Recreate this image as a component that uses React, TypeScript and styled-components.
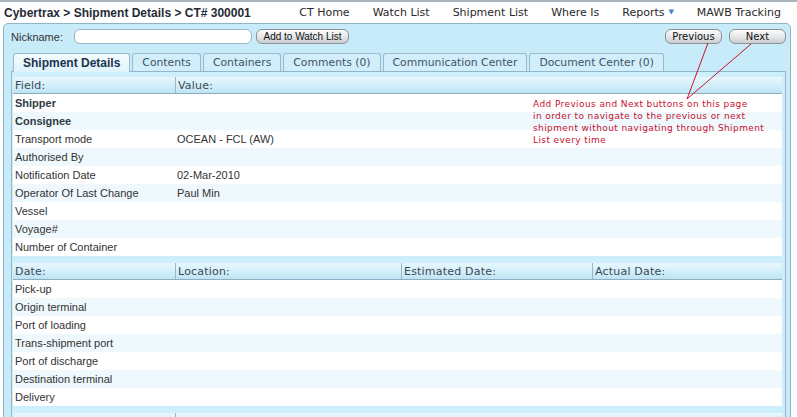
import React from 'react'
import styled, { createGlobalStyle } from 'styled-components'

const GlobalStyle = createGlobalStyle`
  html, body {
    margin: 0;
    padding: 0;
    background: #fff;
  }
  body {
    font-family: "Liberation Sans", Arial, sans-serif;
  }
`

const Page = styled.div`
  position: relative;
  width: 797px;
  height: 417px;
  overflow: hidden;
  border-top: 2px solid #a9b4bd;
  box-sizing: border-box;
`

const HeaderBar = styled.div`
  display: flex;
  align-items: center;
  height: 21px;
  padding: 0 16px 0 4px;
`

const Crumbs = styled.div`
  font-family: "Liberation Sans", Arial, sans-serif;
  font-weight: bold;
  font-size: 12px;
  color: #1f2b36;
  white-space: nowrap;
`

const Nav = styled.nav`
  display: flex;
  gap: 23px;
  margin-left: auto;
`

const NavLink = styled.span`
  font-family: "DejaVu Sans", Verdana, sans-serif;
  font-size: 11px;
  color: #2a2a2a;
  white-space: nowrap;
`

const Caret = styled.span`
  display: inline-block;
  margin-left: 4px;
  color: #3f86c4;
  font-size: 7px;
  vertical-align: 2px;
`

const Panel = styled.div`
  margin: 0 6px 0 3px;
  height: 400px;
  padding: 4px 4px 0 7px;
  background: #c8ebf9;
  border: 1px solid #8fb3c7;
  border-radius: 5px 5px 0 0;
  box-sizing: border-box;
`

const Toolbar = styled.div`
  display: flex;
  align-items: center;
  height: 17px;
  gap: 4px;
`

const Label = styled.span`
  font-size: 11px;
  color: #333;
  width: 59px;
`

const TextInput = styled.div`
  width: 176px;
  height: 13px;
  background: #fff;
  border: 1px solid #9db3c2;
  border-radius: 6px;
`

const PillButton = styled.div<{ $w: number; $font?: string }>`
  display: flex;
  align-items: center;
  justify-content: center;
  width: ${p => p.$w}px;
  height: 15px;
  box-sizing: border-box;
  border: 1px solid #8a9196;
  border-radius: 6px;
  background: linear-gradient(#fbfbfb, #e4e6e8 55%, #c9cdd0);
  font-family: ${p => p.$font ?? '"Liberation Sans", Arial, sans-serif'};
  font-size: 10px;
  color: #111;
  white-space: nowrap;
`

const Spacer = styled.div`
  flex: 1;
`

const NavButtons = styled.div`
  display: flex;
  gap: 7px;
  margin-top: -1px;
`

const TabRow = styled.div`
  display: flex;
  gap: 2px;
  margin-top: 8px;
  padding-left: 2px;
  height: 18px;
`

const Tab = styled.div<{ $active?: boolean }>`
  display: flex;
  align-items: center;
  padding: 0 9px;
  border: 1px solid #97bbcf;
  border-bottom: none;
  border-radius: 3px 3px 0 0;
  background: ${p => (p.$active ? 'linear-gradient(#f4fbfe, #dff3fc)' : '#d2eefa')};
  font-family: ${p => (p.$active ? '"Liberation Sans", Arial, sans-serif' : '"DejaVu Sans", Verdana, sans-serif')};
  font-size: ${p => (p.$active ? 12 : 10.8)}px;
  font-weight: ${p => (p.$active ? 'bold' : 'normal')};
  color: ${p => (p.$active ? '#1b3550' : '#3d5566')};
  position: relative;
  z-index: ${p => (p.$active ? 2 : 1)};
  margin-bottom: ${p => (p.$active ? -1 : 0)}px;
  white-space: nowrap;
`

const Pane = styled.div`
  border: 1px solid #91b6ca;
  background: #cdeefb;
  padding: 5px 3px 0 1px;
  height: 360px;
`

const Grid = styled.div`
  margin-bottom: 7px;
`

const HeadRow = styled.div<{ $cols: string }>`
  display: grid;
  grid-template-columns: ${p => p.$cols};
  height: 16px;
  border-bottom: 1px solid #8eadbf;
  background: linear-gradient(#e8f7fd, #d4effa 50%, #bfe4f4);
`

const HeadCell = styled.div<{ $first?: boolean }>`
  display: flex;
  align-items: center;
  padding-left: 2px;
  border-left: ${p => (p.$first ? 'none' : '1px solid #9fb6c4')};
  font-family: "DejaVu Sans", Verdana, sans-serif;
  font-size: 11px;
  letter-spacing: 0.2px;
  color: #3b4a55;
`

const Row = styled.div<{ $cols: string; $alt: boolean }>`
  display: grid;
  grid-template-columns: ${p => p.$cols};
  height: 18px;
  align-items: center;
  background: ${p => (p.$alt ? '#eef8fd' : '#fff')};
`

const Cell = styled.div<{ $bold?: boolean }>`
  padding-left: 2px;
  font-size: 11px;
  font-weight: ${p => (p.$bold ? 'bold' : 'normal')};
  color: ${p => (p.$bold ? '#2e3b44' : '#333')};
  white-space: nowrap;
`

const Note = styled.div`
  position: absolute;
  left: 533px;
  top: 96px;
  font-family: "DejaVu Sans", Verdana, sans-serif;
  font-size: 9px;
  line-height: 12px;
  color: #c8102e;
  letter-spacing: 0.4px;
`

const Arrows = styled.svg`
  position: absolute;
  left: 0;
  top: 0;
  pointer-events: none;
`

const fieldCols = '162px 1fr'
const dateCols = '162px 226px 191px 1fr'

const fields: [string, string, boolean][] = [
  ['Shipper', '', true],
  ['Consignee', '', true],
  ['Transport mode', 'OCEAN - FCL (AW)', false],
  ['Authorised By', '', false],
  ['Notification Date', '02-Mar-2010', false],
  ['Operator Of Last Change', 'Paul Min', false],
  ['Vessel', '', false],
  ['Voyage#', '', false],
  ['Number of Container', '', false],
]

const stops = [
  'Pick-up',
  'Origin terminal',
  'Port of loading',
  'Trans-shipment port',
  'Port of discharge',
  'Destination terminal',
  'Delivery',
]

const tabs = ['Shipment Details', 'Contents', 'Containers', 'Comments (0)', 'Communication Center', 'Document Center (0)']
const links = ['CT Home', 'Watch List', 'Shipment List', 'Where Is', 'Reports', 'MAWB Tracking']

const App = (): JSX.Element => {
  return (
    <Page>
      <GlobalStyle />
      <HeaderBar>
        <Crumbs>Cybertrax &gt; Shipment Details &gt; CT# 300001</Crumbs>
        <Nav>
          {links.map(l => (
            <NavLink key={l}>
              {l}
              {l === 'Reports' && <Caret>▼</Caret>}
            </NavLink>
          ))}
        </Nav>
      </HeaderBar>
      <Panel>
        <Toolbar>
          <Label>Nickname:</Label>
          <TextInput />
          <PillButton $w={93}>Add to Watch List</PillButton>
          <Spacer />
          <NavButtons>
            <PillButton $w={57} $font='"DejaVu Sans", Verdana, sans-serif'>Previous</PillButton>
            <PillButton $w={57} $font='"DejaVu Sans", Verdana, sans-serif'>Next</PillButton>
          </NavButtons>
        </Toolbar>
        <TabRow>
          {tabs.map((t, i) => (
            <Tab key={t} $active={i === 0}>{t}</Tab>
          ))}
        </TabRow>
        <Pane>
          <Grid>
            <HeadRow $cols={fieldCols}>
              <HeadCell $first>Field:</HeadCell>
              <HeadCell>Value:</HeadCell>
            </HeadRow>
            {fields.map(([f, v, b], i) => (
              <Row key={f} $cols={fieldCols} $alt={i % 2 === 1}>
                <Cell $bold={b}>{f}</Cell>
                <Cell>{v}</Cell>
              </Row>
            ))}
          </Grid>
          <Grid>
            <HeadRow $cols={dateCols}>
              <HeadCell $first>Date:</HeadCell>
              <HeadCell>Location:</HeadCell>
              <HeadCell>Estimated Date:</HeadCell>
              <HeadCell>Actual Date:</HeadCell>
            </HeadRow>
            {stops.map((s, i) => (
              <Row key={s} $cols={dateCols} $alt={i % 2 === 1}>
                <Cell>{s}</Cell>
                <Cell />
                <Cell />
                <Cell />
              </Row>
            ))}
          </Grid>
          <Grid>
            <HeadRow $cols={fieldCols}>
              <HeadCell $first />
              <HeadCell />
            </HeadRow>
          </Grid>
        </Pane>
      </Panel>
      <Note>
        Add Previous and Next buttons on this page<br />
        in order to navigate to the previous or next<br />
        shipment without navigating through Shipment<br />
        List every time
      </Note>
      <Arrows width="797" height="417" viewBox="0 0 797 417">
        <line x1="708" y1="41" x2="687" y2="97" stroke="#c8102e" strokeWidth="1" />
        <line x1="751" y1="42" x2="687" y2="97" stroke="#c8102e" strokeWidth="1" />
      </Arrows>
    </Page>
  )
}

export default App
